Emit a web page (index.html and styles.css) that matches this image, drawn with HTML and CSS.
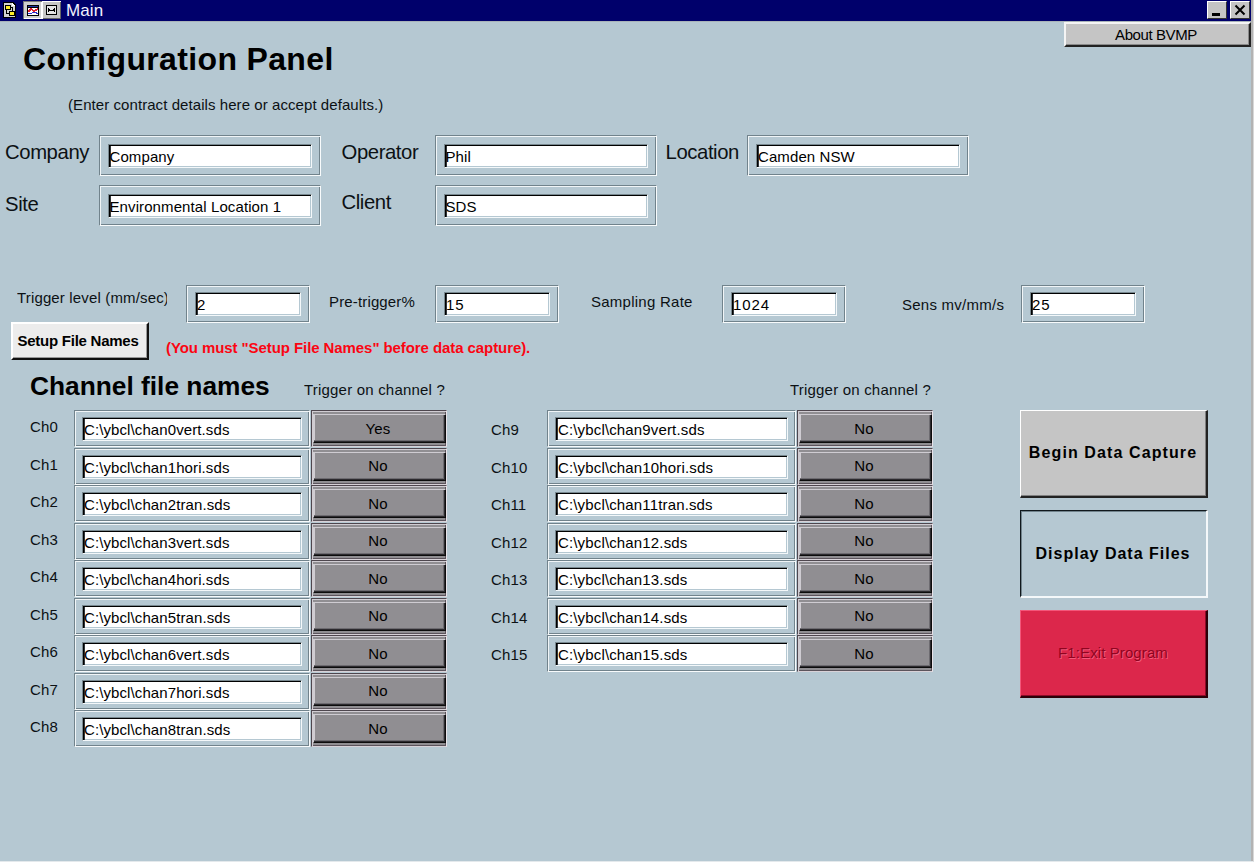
FILE: index.html
```html
<!DOCTYPE html>
<html lang="en">
<head>
<meta charset="utf-8">
<title>Main</title>
<link rel="stylesheet" href="styles.css">
</head>
<body>
<div class="window">
  <header class="titlebar">
    <svg class="app-icon" width="17" height="18" viewBox="0 0 17 18" shape-rendering="crispEdges">
      <path d="M1 1h10l3 3v13H1z" fill="#000"/>
      <path d="M2 2h8v3h3v11H2z" fill="#d4d4d4"/>
      <path d="M10 2v3h3z" fill="#fff"/>
      <path d="M3 4h6v5H3zM7 10h6v5H7z" fill="#000"/>
      <path d="M4 5h4v3H4zM8 11h4v3H8z" fill="#ffee28"/>
      <path d="M9 6h2v4h-1V7H9zM4 9h1v3h2v1H4z" fill="#000"/>
    </svg>
    <span class="view-toggle">
      <svg class="view pressed" width="19" height="18" viewBox="0 0 19 18" shape-rendering="crispEdges">
        <path d="M4 4h12v11H4z" fill="#000"/>
        <path d="M5 5h10v1H5z" fill="#2030a0"/>
        <path d="M5 7h10v7H5z" fill="#fff"/>
        <path d="M5 11l3-3 3 2 4-2" fill="none" stroke="#e02030" stroke-width="1.6"/>
        <path d="M5 12l4 0 3-1 3 2" fill="none" stroke="#3030d0" stroke-width="1"/>
      </svg>
      <svg class="view raised" width="19" height="18" viewBox="0 0 19 18" shape-rendering="crispEdges">
        <path d="M4 4h11v10H4z" fill="#000"/>
        <path d="M5 5h9v8H5z" fill="#e4e4e4"/>
        <path d="M6 7h1v4H6zM12 7h1v4h-1zM7 8h1v2H7zM11 8h1v2h-1zM8 9h3v1H8z" fill="#000"/>
      </svg>
    </span>
    <span class="caption">Main</span>
    <button class="sys"><svg width="18" height="16" viewBox="0 0 18 16" shape-rendering="crispEdges"><path d="M4 11h8v3H4z" fill="#000"/></svg></button>
    <button class="sys"><svg width="18" height="16" viewBox="0 0 18 16"><path d="M4.500 3.500l9 9M13.500 3.500l-9 9" stroke="#000" stroke-width="2"/></svg></button>
  </header>

  <main class="panel">
    <div class="top">
      <h1>Configuration Panel</h1>
      <button class="about">About BVMP</button>
    </div>
    <p class="hint">(Enter contract details here or accept defaults.)</p>

    <section class="details">
      <label class="big">Company</label><div class="frame"><div class="field">Company</div></div>
      <label class="big second-col">Operator</label><div class="frame"><div class="field">Phil</div></div>
      <label class="big third-col">Location</label><div class="frame"><div class="field">Camden NSW</div></div>
      <label class="big low">Site</label><div class="frame"><div class="field">Environmental Location 1</div></div>
      <label class="big second-col">Client</label><div class="frame"><div class="field">SDS</div></div>
    </section>

    <section class="settings">
      <label class="clip">Trigger level (mm/sec)</label><div class="frame"><div class="field">2</div></div>
      <label class="mid">Pre-trigger%</label><div class="frame"><div class="field digits">15</div></div>
      <label class="mid rate">Sampling Rate</label><div class="frame"><div class="field digits">1024</div></div>
      <label class="last">Sens mv/mm/s</label><div class="frame"><div class="field digits">25</div></div>
    </section>

    <div class="setup">
      <button class="setup-button">Setup File Names</button>
      <span class="warning">(You must "Setup File Names" before data capture).</span>
    </div>

    <div class="lower">
      <section class="channels first">
        <div class="channels-head"><h2>Channel file names</h2><span>Trigger on channel ?</span></div>
        <div class="row"><label>Ch0</label><div class="frame"><div class="field">C:\ybcl\chan0vert.sds</div></div><div class="switch"><button>Yes</button></div></div>
        <div class="row"><label>Ch1</label><div class="frame"><div class="field">C:\ybcl\chan1hori.sds</div></div><div class="switch"><button>No</button></div></div>
        <div class="row"><label>Ch2</label><div class="frame"><div class="field">C:\ybcl\chan2tran.sds</div></div><div class="switch"><button>No</button></div></div>
        <div class="row"><label>Ch3</label><div class="frame"><div class="field">C:\ybcl\chan3vert.sds</div></div><div class="switch"><button>No</button></div></div>
        <div class="row"><label>Ch4</label><div class="frame"><div class="field">C:\ybcl\chan4hori.sds</div></div><div class="switch"><button>No</button></div></div>
        <div class="row"><label>Ch5</label><div class="frame"><div class="field">C:\ybcl\chan5tran.sds</div></div><div class="switch"><button>No</button></div></div>
        <div class="row"><label>Ch6</label><div class="frame"><div class="field">C:\ybcl\chan6vert.sds</div></div><div class="switch"><button>No</button></div></div>
        <div class="row"><label>Ch7</label><div class="frame"><div class="field">C:\ybcl\chan7hori.sds</div></div><div class="switch"><button>No</button></div></div>
        <div class="row"><label>Ch8</label><div class="frame"><div class="field">C:\ybcl\chan8tran.sds</div></div><div class="switch"><button>No</button></div></div>
      </section>
      <section class="channels second">
        <div class="channels-head"><span>Trigger on channel ?</span></div>
        <div class="row"><label>Ch9</label><div class="frame"><div class="field">C:\ybcl\chan9vert.sds</div></div><div class="switch"><button>No</button></div></div>
        <div class="row"><label>Ch10</label><div class="frame"><div class="field">C:\ybcl\chan10hori.sds</div></div><div class="switch"><button>No</button></div></div>
        <div class="row"><label>Ch11</label><div class="frame"><div class="field">C:\ybcl\chan11tran.sds</div></div><div class="switch"><button>No</button></div></div>
        <div class="row"><label>Ch12</label><div class="frame"><div class="field">C:\ybcl\chan12.sds</div></div><div class="switch"><button>No</button></div></div>
        <div class="row"><label>Ch13</label><div class="frame"><div class="field">C:\ybcl\chan13.sds</div></div><div class="switch"><button>No</button></div></div>
        <div class="row"><label>Ch14</label><div class="frame"><div class="field">C:\ybcl\chan14.sds</div></div><div class="switch"><button>No</button></div></div>
        <div class="row"><label>Ch15</label><div class="frame"><div class="field">C:\ybcl\chan15.sds</div></div><div class="switch"><button>No</button></div></div>
      </section>
      <aside class="actions">
        <button class="action begin">Begin Data Capture</button>
        <button class="action display">Display Data Files</button>
        <button class="action exit">F1:Exit Program</button>
      </aside>
    </div>
  </main>
</div>
</body>
</html>
```
FILE: styles.css
```css
* { box-sizing: border-box; }
body {
  margin: 0;
  background: #b5c8d2;
  color: #0c1114;
  font: 15px/20px "Liberation Sans", Arial, sans-serif;
  letter-spacing: 0.15px;
  overflow: hidden;
}
button { font: inherit; letter-spacing: inherit; color: #000; padding: 0; border: 0; border-radius: 0; }
h1, h2, p { margin: 0; }
label { white-space: nowrap; }

.window {
  width: 1254px;
  height: 862px;
  border-right: 1px solid #d8d8d8;
  border-bottom: 1px solid #e4e9ec;
  box-shadow: inset -2px 0 #b3b3b3;
  display: flex;
  flex-direction: column;
}

/* Title bar */
.titlebar {
  height: 22px;
  width: 1251px;
  background: #00006b;
  border-bottom: 1px solid #a9b3b9;
  display: flex;
  align-items: flex-start;
  padding: 1px 1px 0 2px;
}
.view-toggle { display: flex; margin-left: 4px; }
.view.pressed { background: #d0d0d0; box-shadow: inset 1px 1px #777, inset -1px -1px #fff; }
.view.raised { background: #c6c6c6; box-shadow: inset 1px 1px #fff, inset -1px -1px #666; }
.caption { color: #f2f2ff; font-size: 17px; line-height: 19px; letter-spacing: 0.1px; margin-left: 5px; flex: 1; }
.sys {
  width: 20px;
  height: 18px;
  background: #c4c4c4;
  border: 1px solid;
  border-color: #fff #333 #333 #fff;
  margin-left: 3px;
  display: flex;
}

/* Heading */
.top { display: flex; justify-content: space-between; height: 70px; padding-left: 23px; width: 1251px; }
h1 { font-size: 32px; line-height: 40px; letter-spacing: 0.35px; margin-top: 17px; color: #000; }
.about {
  width: 187px;
  height: 25px;
  background: #c5c5c5;
  border: 2px solid;
  border-color: #f4f4f4 #222 #222 #f4f4f4;
  box-shadow: inset -1px -1px #8a8a8a;
  letter-spacing: -0.4px;
  line-height: 20px;
  padding-right: 3px;
}
.hint { margin: 3px 0 0 68px; letter-spacing: 0.07px; }

/* Etched frame with a sunken text field */
.frame {
  border: 1px solid;
  border-color: #71838c #f8fbfc #f8fbfc #71838c;
  box-shadow: inset 1px 1px #f0f5f7, inset -1px -1px #71838c;
  padding: 8px;
}
.field {
  height: 24px;
  background: #fff;
  border: 1px solid;
  border-color: #78888f #f4f8fa #f4f8fa #78888f;
  box-shadow: inset 1px 1px #000, inset 2px 0 #30363a, inset -1px -1px #b5c8d2;
  padding: 2px 0 0 1px;
  letter-spacing: 0.1px;
  white-space: nowrap;
  color: #000;
}
.field.digits { letter-spacing: 0.9px; }

.details {
  display: grid;
  grid-template-columns: 93.500px 222px 114px 222px 90.500px 222px;
  grid-template-rows: 41px 41px;
  row-gap: 9px;
  padding-left: 5px;
  margin-top: 20px;
}
.big { font-size: 20.3px; line-height: 24px; letter-spacing: -0.4px; padding-top: 5px; }
.big.low { padding-top: 7px; }
.big.second-col { padding-left: 21px; }
.big.third-col { padding-left: 9px; }

/* Acquisition settings */
.settings {
  display: grid;
  grid-template-columns: 168px 124px 125px 124px 163px 124px 175px 124px;
  padding-left: 18px;
  height: 37px;
  margin-top: 59px;
}
.settings .clip { width: 150px; margin-left: -1px; overflow: hidden; padding-top: 3px; }
.settings .mid { padding: 7px 0 0 19px; }
.settings .rate { padding-left: 32px; letter-spacing: 0.25px; }
.settings .last { padding: 10px 0 0 56px; letter-spacing: 0.25px; }
.settings .frame { padding: 6px 8px; }

.setup { display: flex; padding-left: 11px; height: 38px; }
.setup-button {
  width: 138px;
  height: 38px;
  background: #ececec;
  border: 2px solid;
  border-color: #fff #111 #111 #fff;
  box-shadow: inset -1px -1px #999;
  font-weight: bold;
  font-size: 15px;
  letter-spacing: -0.25px;
  padding-right: 4px;
}
.warning { color: #fb0512; font-weight: bold; letter-spacing: -0.08px; margin: 16px 0 0 17px; }

/* Channel tables */
.lower { display: flex; padding-top: 10px; }
.channels-head { display: flex; height: 40px; }
.channels-head span { margin-top: 10px; letter-spacing: 0.2px; margin-left: auto; }
h2 { font-size: 26.3px; line-height: 32px; letter-spacing: 0; color: #000; }
.first { width: 417px; margin-left: 30px; }
.channels-head span { margin-right: 2px; }
.second { width: 442px; margin-left: 44px; }
.row { display: flex; height: 37.5px; }
.row label { width: 44px; padding-top: 7px; }
.second .row label { width: 56px; padding-top: 10px; }
.row .frame { width: 236px; height: 37px; padding: 6px 7px 0 7px; }
.second .row .frame { width: 249px; }
.second .row .field { letter-spacing: 0.15px; padding-left: 2px; }
.switch {
  flex: 1;
  height: 37px;
  margin-left: 1px;
  padding: 3px 0 2px 1px;
  background: #908e92;
  border: 1px solid;
  border-color: #4e464e #e8e2e8 #d8d2d8 #4e464e;
  box-shadow: inset 1px 1px #d0ccd2, inset -1px -1px #5c545c;
}
.switch button {
  width: 133px;
  height: 29px;
  display: block;
  background: #908e92;
  border: 1px solid;
  border-color: #cfccd2 #0c0c0c #0c0c0c #cfccd2;
  box-shadow: inset -1px -1px #2c2a2e, inset -2px -2px #6d6b70, inset 1px 0 #cfccd2;
  line-height: 20px;
  padding: 0 3px 0 0;
}

/* Action buttons */
.actions { display: flex; flex-direction: column; gap: 12px; margin: 40px 0 0 87px; }
.action { width: 188px; height: 88px; border: 2px solid; font-size: 16px; font-weight: bold; letter-spacing: 1.1px; padding: 0 1px 2px 0; }
.begin { background: #c5c5c5; border-color: #fff #222 #222 #fff; border-width: 1px 2px 2px 1px; box-shadow: inset -1px -1px #808080; }
.display { background: #b5c8d2; border-color: #10181c #f4f8fa #f4f8fa #10181c; border-width: 1px 2px 2px 1px; box-shadow: inset 1px 1px #71838c; letter-spacing: 1px; padding-bottom: 0; }
.exit {
  background: #dc274b;
  border-color: #f4577a #2c0008 #2c0008 #f4577a;
  border-width: 1px 2px 2px 1px;
  box-shadow: inset -1px -1px #8c0c28;
  color: #8e0520;
  text-shadow: 1px 1px #f55a7c;
  font-size: 15px;
  font-weight: normal;
  letter-spacing: 0.1px;
}
```
